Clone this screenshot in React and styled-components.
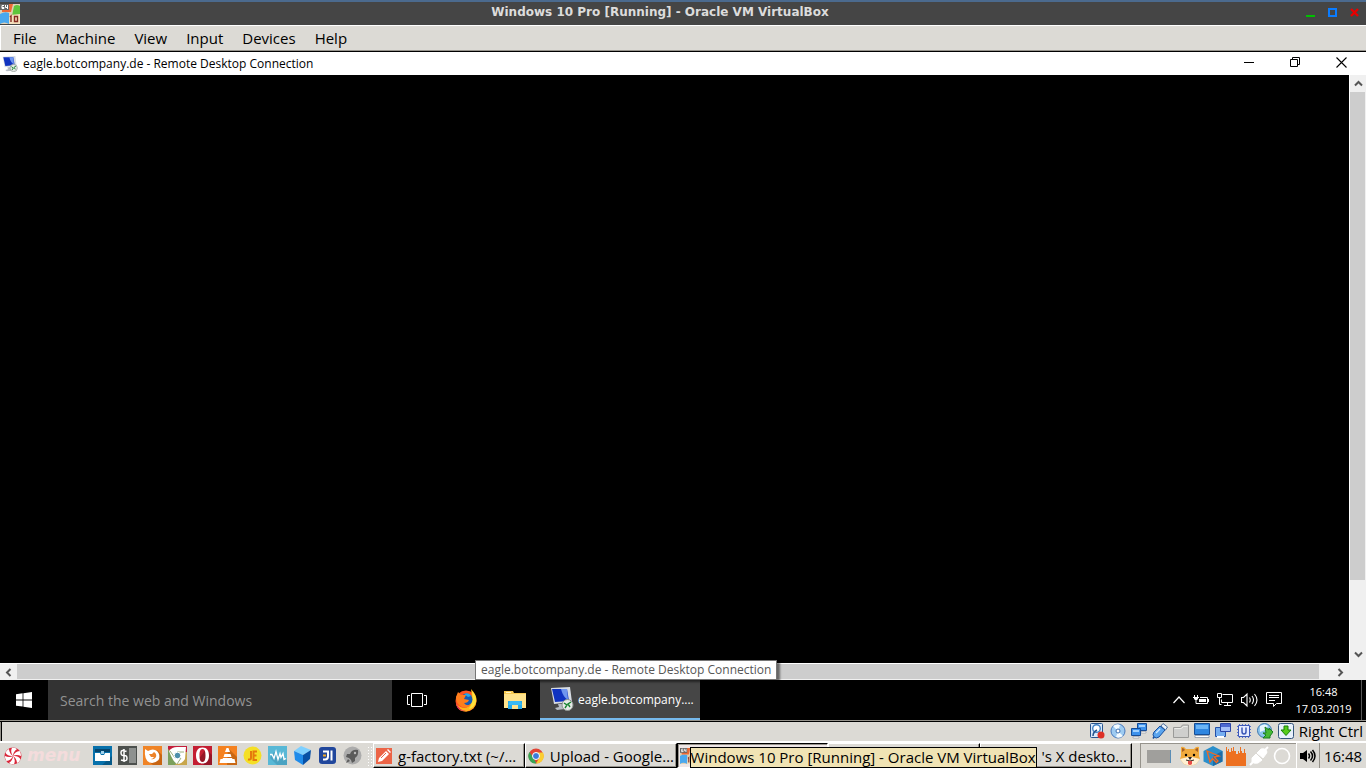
import React from 'react';
import styled, { createGlobalStyle } from 'styled-components';

const App = () => {
  return (
    <Screen>
      <GlobalStyle />
      <HostTitleBar>
        <VmIcon size={20} />
        <HostTitle>Windows 10 Pro [Running] - Oracle VM VirtualBox</HostTitle>
        <HostButtons>
          <HostButton aria-label="Minimize">
            <Svg $w={9} $h={9} viewBox="0 0 9 9"><path d="M0 7h9v2H0z" fill="#00c000" /></Svg>
          </HostButton>
          <HostButton aria-label="Maximize">
            <Svg $w={9} $h={9} viewBox="0 0 9 9"><path d="M1 1h7v7H1z" fill="none" stroke="#0a7cff" strokeWidth="2" /></Svg>
          </HostButton>
          <HostButton aria-label="Close">
            <Svg $w={9} $h={9} viewBox="0 0 9 9"><path d="M1 1l7 7M8 1L1 8" stroke="#e80000" strokeWidth="2.4" /></Svg>
          </HostButton>
        </HostButtons>
      </HostTitleBar>

      <MenuBar>
        {menus.map((name) => (
          <MenuButton key={name}>{name}</MenuButton>
        ))}
      </MenuBar>

      <GuestTitleBar>
        <RemoteIcon size={16} />
        <GuestTitle>eagle.botcompany.de - Remote Desktop Connection</GuestTitle>
        <GuestButton aria-label="Minimize">
          <Svg $w={11} $h={11} viewBox="0 0 11 11"><path d="M0 5.5h10" stroke="#000" /></Svg>
        </GuestButton>
        <GuestButton aria-label="Restore">
          <Svg $w={11} $h={11} viewBox="0 0 11 11"><path d="M.5 2.5h7v7h-7zM2.5 2.5v-2h7v7h-2" fill="none" stroke="#000" /></Svg>
        </GuestButton>
        <GuestButton aria-label="Close">
          <Svg $w={11} $h={11} viewBox="0 0 11 11"><path d="M.5.5l10 10M10.5.5l-10 10" stroke="#000" strokeWidth="1.1" /></Svg>
        </GuestButton>
      </GuestTitleBar>

      <Viewport>
        <RemoteScreen />
        <ScrollBar $vertical>
          <ScrollButton aria-label="Scroll up"><Chevron turn={0} /></ScrollButton>
          <Track $vertical><Thumb $vertical /></Track>
          <ScrollButton aria-label="Scroll down"><Chevron turn={180} /></ScrollButton>
        </ScrollBar>
        <ScrollBar>
          <ScrollButton aria-label="Scroll left"><Chevron turn={270} /></ScrollButton>
          <Track><Thumb /></Track>
          <ScrollButton aria-label="Scroll right"><Chevron turn={90} /></ScrollButton>
        </ScrollBar>
        <Corner />
      </Viewport>

      <WinTaskbar>
        <StartButton aria-label="Start">
          <Svg $w={16} $h={16} viewBox="0 0 16 16">
            <path d="M0 2.2L6.6 1.3V7.5H0zM7.4 1.2L16 0v7.5H7.4zM0 8.4h6.6v6.2L0 13.7zM7.4 8.4H16V16l-8.6-1.3z" fill="#fff" />
          </Svg>
        </StartButton>
        <SearchBox type="text" aria-label="Search" placeholder="Search the web and Windows" />
        <WinButton aria-label="Task View">
          <Svg $w={20} $h={14} viewBox="0 0 20 14">
            <path d="M4.5.5h11v13h-11zM3 2.5H.5v9H3M17 2.5h2.5v9H17" fill="none" stroke="#fff" />
          </Svg>
        </WinButton>
        <WinButton aria-label="Firefox"><FirefoxIcon /></WinButton>
        <WinButton aria-label="File Explorer"><FolderIcon /></WinButton>
        <WinTask>
          <RemoteIcon size={24} />
          <span>eagle.botcompany....</span>
          <WinTooltip role="tooltip">eagle.botcompany.de - Remote Desktop Connection</WinTooltip>
        </WinTask>
        <WinTray>
          <Svg $w={12} $h={16} viewBox="0 0 12 16"><path d="M.5 11L6 5l5.5 6" fill="none" stroke="#fff" strokeWidth="1.2" /></Svg>
          <Svg $w={16} $h={16} viewBox="0 0 16 16">
            <path d="M1.500 3v2M4.500 3v2M0 5.500h6M1 6.500h4M1.500 7.500h3M3 8v3.500h2M7 5.500h7.500v6H4.500" fill="none" stroke="#fff" />
            <path d="M6 7h7v3H6zM15 7h1v3h-1z" fill="#fff" />
          </Svg>
          <Svg $w={16} $h={16} viewBox="0 0 16 16">
            <path d="M5.500 2.500h10v8h-11v-3M10.500 10.500v3M7 13.500h7M.5 1.500h4v4h-4zM2.500 5.500v7h2" fill="none" stroke="#fff" />
          </Svg>
          <Svg $w={17} $h={16} viewBox="0 0 17 16">
            <path d="M.5 5.500h2l3.500-3.500v12l-3.500-3.500h-2zM8.500 5.500q1.500 2.500 0 5M11 4q3 4 0 8M13.500 2q5 6 0 12" fill="none" stroke="#fff" strokeWidth="1.100" />
          </Svg>
          <Svg $w={16} $h={16} viewBox="0 0 16 16">
            <path d="M.5.500h15v11H10.500l-3 3v-3h-7zM3 3.500h10M3 5.500h10M3 8.500h6" fill="none" stroke="#fff" />
          </Svg>
          <WinClock>
            <span>16:48</span>
            <span>17.03.2019</span>
          </WinClock>
        </WinTray>
      </WinTaskbar>

      <StatusBar>
        <DiskIcon />
        <DiscIcon />
        <NetworkIcon />
        <UsbIcon />
        <Svg $w={16} $h={16} viewBox="0 0 16 16">
          <path d="M.5 14.500v-10h7l2-2.500h6v12.500z" fill="#cfcfcd" stroke="#9a9a98" />
          <path d="M1.500 5.500h7l2-2h4" fill="none" stroke="#ecece9" />
        </Svg>
        <Svg $w={16} $h={16} viewBox="0 0 16 16">
          <path d="M.5.500h15v11H.5z" fill="#2f86e0" stroke="#174f98" />
          <path d="M2 2h12v4H2z" fill="#6bb4f5" />
          <path d="M1 12.500h14v2H1z" fill="#fff" stroke="#6b7b90" strokeWidth=".6" />
        </Svg>
        <Svg $w={16} $h={16} viewBox="0 0 16 16">
          <path d="M.5 4.500h10v9H.5z" fill="#76aef0" stroke="#2450a8" />
          <path d="M5.500.500h10v8h-10z" fill="#a5bff8" stroke="#2c46a8" />
          <path d="M6 1h9v3H6z" fill="#4d68d0" />
          <path d="M2 13h7v2H2z" fill="#fff" />
        </Svg>
        <Svg $w={16} $h={16} viewBox="0 0 16 16">
          <path d="M1 3.500h14M1 6.500h14M1 9.500h14M1 12.500h14M3.500 1v14M6.500 1v14M9.500 1v14M12.500 1v14" stroke="#5870c8" />
          <path d="M2.500 2.500h11v11h-11z" fill="#e7ecff" stroke="#3c58b8" />
          <path d="M6 4.500v4q0 2.500 2 2.500t2-2.500v-4" fill="none" stroke="#3c58b8" strokeWidth="1.500" />
        </Svg>
        <Svg $w={16} $h={16} viewBox="0 0 16 16">
          <circle cx="7.500" cy="7.500" r="7" fill="#8ec6ee" stroke="#3b76ad" />
          <path d="M3 3q5-3 8 0l-3 4-5 2z" fill="#e8f6ff" />
          <path d="M8 4l4 3V5l4 4-3 4v2H6l3-3-3-2h3z" fill="#48ba35" stroke="#187d20" />
        </Svg>
        <Svg $w={16} $h={16} viewBox="0 0 16 16">
          <rect x=".5" y=".5" width="15" height="15" rx="2" fill="#e7f0fb" stroke="#35557e" />
          <path d="M6 3h4v4h3l-5 5.500L3 7h3z" fill="#55cb19" stroke="#168007" />
        </Svg>
        <HostKey>Right Ctrl</HostKey>
      </StatusBar>

      <Panel>
        <MenuLauncher>
          <PeppermintIcon />
          <span>menu</span>
        </MenuLauncher>
        <Launchers>
          {launchers.map(({ name, art }) => (
            <IconButton key={name} aria-label={name}>
              <Svg $w={19} $h={19} viewBox="0 0 19 19">{art}</Svg>
            </IconButton>
          ))}
        </Launchers>
        <Grip />
        <TaskList>
          <Task>
            <Svg $w={16} $h={16} viewBox="0 0 16 16">
              <path d="M0 0h16v16H0z" fill="#ec6446" />
              <path d="M2 14l1-4 7-7 3 3-7 7zM11 2l1-1 3 3-1 1z" fill="#fff" />
              <path d="M5 10l5-5" stroke="#ec6446" />
            </Svg>
            <TaskLabel>g-factory.txt (~/…</TaskLabel>
          </Task>
          <Task>
            <ChromeIcon />
            <TaskLabel>Upload - Google…</TaskLabel>
          </Task>
          <Task $active>
            <VmIcon size={16} />
            <PanelTooltip role="tooltip">Windows 10 Pro [Running] - Oracle VM VirtualBox</PanelTooltip>
          </Task>
          <Task aria-label="Window" />
          <Task $alignEnd>
            <TaskLabel>'s X deskto…</TaskLabel>
          </Task>
        </TaskList>
        <Tray>
          <Pager />
          <ShibaIcon />
          <Svg $w={20} $h={20} viewBox="0 0 20 20">
            <path d="M10 0l9.500 5v10.500L10 20 .5 15.500V5z" fill="#2c8fcb" />
            <path d="M10 10l9.500-5v10.500L10 20z" fill="#1d6da6" />
            <path d="M4 5l12 5-5 1 4 4-1.500 1.500-4-4L7 16z" fill="none" stroke="#f26a21" strokeWidth="1.300" />
          </Svg>
          <Svg $w={20} $h={20} viewBox="0 0 20 20">
            <path d="M0 20V1h1v4h1V3h1v3h2V2h1v3h1V1h1v4h2v3h2V5h1v2h1V1h1v4h1v2h2V3h1v4h1v13z" fill="#ed7020" />
          </Svg>
          <Svg $w={20} $h={20} viewBox="0 0 20 20">
            <path d="M1 19l4-4M15 5l4-4" stroke="#fff" strokeWidth="2" />
            <path d="M3 12l4-4 6 6-4 3q-4 1-6-1zM8 7l4-4q3-1 5 1t0 4l-3 4z" fill="#fff" stroke="#fff" />
          </Svg>
          <Svg $w={20} $h={20} viewBox="0 0 20 20"><circle cx="10" cy="10" r="7.500" fill="none" stroke="#fff" strokeWidth="1.600" /></Svg>
        </Tray>
        <SoundButton aria-label="Volume">
          <Svg $w={16} $h={16} viewBox="0 0 16 16">
            <path d="M0 5h3l4-3v12l-4-3H0z" />
            <path d="M8.500 5.500q2 2.500 0 5M10.500 3.500q4 4.500 0 9M12.500 2q5 6 0 12" fill="none" stroke="#000" strokeWidth="1.500" />
          </Svg>
        </SoundButton>
        <PanelClock>16:48</PanelClock>
      </Panel>
    </Screen>
  );
};

const menus = ['File', 'Machine', 'View', 'Input', 'Devices', 'Help'];

const launchers = [
  {
    name: 'Files',
    art: <>
      <path d="M0 0h19v19H0z" fill="#0871ab" />
      <path d="M9 19l10-9v9z" fill="#075987" />
      <path d="M2 3h15v3H2z" fill="#06466e" />
      <path d="M2 7h5l1 2h3l1-2h5v8H2z" fill="#fff" />
      <path d="M8 5h3v3H8z" fill="#9ed0ea" />
    </>,
  },
  {
    name: 'Terminal',
    art: <>
      <path d="M0 0h19v19H0z" fill="#4c504d" />
      <path d="M11 2h7v15h-7z" fill="#8e918f" />
      <path d="M8.500 5.500Q3 3 3 6.500T6 9.500t3 3-6 1.500M6 3v13" fill="none" stroke="#fff" strokeWidth="1.500" />
    </>,
  },
  {
    name: 'Firefox',
    art: <>
      <path d="M0 0h19v19H0z" fill="#f08426" />
      <path d="M14 4l5 5v10h-9l-6-5z" fill="#c86512" />
      <path d="M2 3l3 2q5-3 9 0 4 4 1.500 9-4 4-9 2.500Q1 14 2 3z" fill="#fff" />
      <path d="M6 8l3 0 2-2q3 2 2 5-2 3-5 2 2 0 3-2H8z" fill="#ed8228" />
    </>,
  },
  {
    name: 'Chrome',
    art: <>
      <path d="M0 0h19v19H0z" fill="#c8a64b" />
      <path d="M0 0h19v6H9L4 9 0 3z" fill="#c41e3a" />
      <path d="M0 3l5 8 5 3-3 5H0z" fill="#7ba05b" />
      <path d="M1 5q3-4 8-4h9l-1 12q-3 5-8 5-4-2-8-13z" fill="#fff" />
      <path d="M2 5l5 7M16 6H9M9 18l4-6" stroke="#9aae7c" />
      <circle cx="9.500" cy="9.500" r="3.300" fill="#4d8fab" stroke="#fff" />
    </>,
  },
  {
    name: 'Opera',
    art: <>
      <path d="M0 0h19v19H0z" fill="#c41e32" />
      <path d="M13 3l6 6v10h-8l-6-5z" fill="#961526" />
      <path fillRule="evenodd" d="M9.500 1.500C5 1.500 3 5 3 9.500S5 17.500 9.500 17.500 16 14 16 9.500 14 1.500 9.500 1.500zm0 1.500C12 3 12.500 6 12.500 9.500S12 16 9.500 16 6.500 13 6.500 9.500 7 3 9.500 3z" fill="#fff" />
    </>,
  },
  {
    name: 'VLC',
    art: <>
      <path d="M0 0h19v19H0z" fill="#f58220" />
      <path d="M10 2l9 9v8H9z" fill="#c96813" />
      <path d="M8.500 2h2L12 6H7zM6.500 8h6l1 3h-8zM2.500 13h14l1 4h-16z" fill="#fff" />
      <path d="M5 12h9l1 2H4z" fill="#fff" />
    </>,
  },
  {
    name: 'JE',
    art: <>
      <circle cx="9.500" cy="9.500" r="9" fill="#f5df25" />
      <path d="M8 5v7q0 2-3 1.500M14 5.500h-3.500V14H14M10.500 9.500h3" fill="none" stroke="#e5790b" strokeWidth="2" />
    </>,
  },
  {
    name: 'Monitor',
    art: <>
      <path d="M0 0h19v19H0z" fill="#58b8d6" />
      <path d="M6 6l13 8v5H9L2 12z" fill="#4aa3c2" />
      <path d="M2 8.500h2l2 4 2-7 2 8 2-6 1 4 2-4 1 6 2-1" fill="none" stroke="#fff" strokeWidth="1.300" />
    </>,
  },
  {
    name: 'VirtualBox',
    art: <>
      <path d="M8 0l10 4-8 5L1 5z" fill="#7fd0ff" />
      <path d="M1 5l9 4v10l-8-5z" fill="#1f8bea" />
      <path d="M18 4l-8 5v10l7-6z" fill="#0750a6" />
    </>,
  },
  {
    name: 'JI',
    art: <>
      <rect x="1" y="1" width="17" height="17" rx="3" fill="#21479c" />
      <path d="M5 5.500h5v5q0 3-3 3H5M13.500 4.500v10" fill="none" stroke="#fff" strokeWidth="2" />
      <path d="M5 9.500h3" stroke="#f0ad28" strokeWidth="2" />
    </>,
  },
  {
    name: 'Rocket',
    art: <>
      <circle cx="9.500" cy="9.500" r="9" fill="#acacac" />
      <path d="M15 4q-6-1-8 4H4l-1 3 3 1 2 2 1 3 3-2v-3q4-3 3-8zM5 13l-2 4 4-2z" fill="#5b5b5b" />
      <circle cx="12" cy="7" r="1.200" fill="#bbb" />
    </>,
  },
];

const VmIcon = ({ size }) => (
  <Svg $w={size} $h={size} viewBox="0 0 20 20">
    <path d="M0 0h20v20H0z" fill="#dfd0b5" />
    <path d="M0 10q5-3 9-1v11q-5-3-9 0z" fill="#4aa8ee" />
    <path d="M9 0h4l-2 8H2V6z" fill="#ed6a35" />
    <path d="M14 2q3-2 6 0v10h-8z" fill="#5dc63c" />
    <path d="M10 11l10-1v10H9z" fill="#f4e0bd" />
    <path d="M0 0h9v6H0z" fill="#666" />
    <path d="M4 1.500H2v3h2v-1H2M5.500 1v2.500h2M7.500 1v4" fill="none" stroke="#fff" />
    <path d="M10 13l1-1v6M14.500 12.500h3v5h-3z" fill="none" stroke="#852a22" strokeWidth="1.400" />
  </Svg>
);

const RemoteIcon = ({ size }) => (
  <Svg $w={size} $h={size} viewBox="0 0 24 24">
    <path d="M1 1l19-1 2 15-18 2z" fill="#d7dce3" />
    <path d="M2 2h15l2 12-14 1z" fill="#1033c0" />
    <path d="M11 2h6l1 11q-5-3-7-11z" fill="#6f96ef" />
    <path d="M8 17h6l1 5-8 1-2-2 4-1z" fill="#b7bdc4" />
    <circle cx="17.500" cy="18" r="5.500" fill="#e6e9e7" stroke="#8d9591" />
    <path d="M14 16l3 2-2 3M21 15l-3 2 2 3" fill="none" stroke="#16842f" strokeWidth="1.400" />
  </Svg>
);

const FirefoxIcon = () => (
  <Svg $w={24} $h={24} viewBox="0 0 24 24">
    <circle cx="12" cy="13" r="10.500" fill="#ff5420" />
    <path d="M17 1q6 6 5.500 12-1 9-10 10.500Q4 24 2 16q8 7 13 2 4-7 2-17z" fill="#ffb51b" />
    <path d="M18 3q5 5 4 11-2 6-7 7 5-8 3-18z" fill="#ffe13c" />
    <circle cx="12.500" cy="11.500" r="6" fill="#155bb5" />
    <path d="M10 6q5-2 7 2l-3 1z" fill="#25a8e8" />
    <path d="M2 9l2-5 3 3 5 0-2 4 5 1q-1 3-5 3 3 4 7 1-3 5-9 3-6-3-6-10z" fill="#ff7e1c" />
    <path d="M2 15q3 7 10 8-9 1-10-8z" fill="#e5255d" />
  </Svg>
);

const FolderIcon = () => (
  <Svg $w={22} $h={20} viewBox="0 0 22 20">
    <path d="M0 1h9l1 2h12v15H0z" fill="#f7ca52" />
    <path d="M0 4h22v14H0z" fill="#ffe38c" />
    <path d="M2 2h5v1H2z" fill="#fff3c5" />
    <path d="M4 11h14v8h-4v-4H8v4H4z" fill="#27a9e8" />
    <path d="M6 11h10l2 4H4z" fill="#39baf4" />
    <path d="M8 15h6v4H8z" fill="#ffe38c" />
  </Svg>
);

const ChromeIcon = () => (
  <Svg $w={16} $h={16} viewBox="0 0 16 16">
    <circle cx="8" cy="8" r="7.500" fill="#e24435" />
    <path d="M1.500 4l4 6 3 5.500A7.500 7.500 0 011.500 4z" fill="#37a554" />
    <path d="M8 4.500h7a7.500 7.500 0 01-7 11l3.500-6z" fill="#fbce32" />
    <circle cx="8" cy="8" r="3.500" fill="#3b7cda" stroke="#fff" />
  </Svg>
);

const DiskIcon = () => (
  <Svg $w={16} $h={16} viewBox="0 0 16 16">
    <rect x="1.500" y=".5" width="12" height="14" rx="1" fill="#dceafa" stroke="#28568f" />
    <circle cx="7.500" cy="5.500" r="3.800" fill="#fff" stroke="#4383c5" strokeWidth="1.400" />
    <path d="M4 13q0-4 4-6" fill="none" stroke="#27568c" strokeWidth="1.500" />
    <circle cx="12" cy="12" r="3.500" fill="#de3026" />
  </Svg>
);

const DiscIcon = () => (
  <Svg $w={16} $h={16} viewBox="0 0 16 16">
    <circle cx="8" cy="8" r="7" fill="#9ecbf1" stroke="#4778bc" />
    <path d="M8 8L3 3q4-3 7-1zM8 8l5 5q-4 3-7 1z" fill="#f4fbff" />
    <circle cx="8" cy="8" r="2" fill="#fff" stroke="#3d70b1" />
  </Svg>
);

const NetworkIcon = () => (
  <Svg $w={16} $h={16} viewBox="0 0 16 16">
    <path d="M6.500.500h9v7h-9z" fill="#3c91ec" stroke="#174c96" />
    <path d="M10 8.500h5v1.500h-5z" fill="#fff" stroke="#7b8290" strokeWidth=".5" />
    <path d="M.5 5.500h9v7h-9z" fill="#3c91ec" stroke="#174c96" />
    <path d="M8 2h6v2H8zM2 7h6v2H2z" fill="#9fd0ff" />
    <path d="M2 13.500h6V15H2z" fill="#fff" stroke="#7b8290" strokeWidth=".5" />
  </Svg>
);

const UsbIcon = () => (
  <Svg $w={16} $h={16} viewBox="0 0 16 16">
    <path d="M11 .5l4.500 3.500-2 3L9 3z" fill="#e8f1fb" stroke="#4e6f9d" />
    <path d="M8 3l5 4-6 7q-3 2-5 0t0-5z" fill="#5ba5ee" stroke="#174f9f" />
    <path d="M4 10l4-4" stroke="#d2eaff" strokeWidth="1.500" />
    <path d="M2 14l-1 1.500" stroke="#174f9f" strokeWidth="1.500" />
  </Svg>
);

const PeppermintIcon = () => (
  <Svg $w={18} $h={18} viewBox="0 0 18 18">
    <circle cx="9" cy="9" r="8.500" fill="#d9273a" />
    {[0, 60, 120, 180, 240, 300].map((angle) => (
      <path key={angle} d="M9 9Q6 5 8 .8q3-.3 5 1.200Q9 5 9 9z" fill="#fff" transform={`rotate(${angle} 9 9)`} />
    ))}
  </Svg>
);

const ShibaIcon = () => (
  <Svg $w={20} $h={20} viewBox="0 0 20 20">
    <path d="M1 1q3-1 5 2h8q2-3 5-2v9l1 3-4 5-6 2-6-2-4-5 1-3z" fill="#f0aa3c" />
    <path d="M2 2q2 0 3 2L2 6zM18 2q-2 0-3 2l3 2z" fill="#a75f27" />
    <path d="M0 13l4-1 4-1h4l4 1 4 1-4 5-6 2-6-2z" fill="#fff0d2" />
    <path d="M8 11h4l-2 3z" fill="#26201d" />
    <circle cx="6" cy="9" r="1.200" />
    <circle cx="14" cy="9" r="1.200" />
    <path d="M6 14q4 2 8 0" fill="none" stroke="#3a2a20" />
    <path d="M8 15h4v3q-2 2-4 0z" fill="#e84d48" />
  </Svg>
);

const Chevron = ({ turn }) => (
  <Svg $w={9} $h={9} viewBox="0 0 9 9">
    <path d="M1 6.500l3.500-3.500L8 6.500" fill="none" stroke="#555" strokeWidth="2" transform={`rotate(${turn} 4.500 4.500)`} />
  </Svg>
);

const GlobalStyle = createGlobalStyle`
  * {
    box-sizing: border-box;
  }

  body {
    margin: 0;
    background-color: #000000;
  }

  button, input {
    margin: 0;
    padding: 0;
    border: 0;
    border-radius: 0;
    background: none;
    color: inherit;
    font: inherit;
  }
`;

const Svg = styled.svg`
  display: block;
  flex: none;
  width: ${props => props.$w}px;
  height: ${props => props.$h}px;
`;

const Screen = styled.div`
  display: flex;
  flex-direction: column;
  height: 100vh;
  overflow: hidden;
  font-family: 'Open Sans', 'Noto Sans', sans-serif;
  font-size: 15px;
  color: #000000;
`;

const HostTitleBar = styled.header`
  display: grid;
  grid-template-columns: 60px 1fr 106px;
  align-items: center;
  height: 25px;
  border-top: 2px solid #4b6a8e;
  background-color: #454545;
`;

const HostTitle = styled.h1`
  margin: 0;
  padding-bottom: 4px;
  text-align: center;
  font-family: 'DejaVu Sans', sans-serif;
  font-size: 12px;
  line-height: 18px;
  font-weight: bold;
  color: #dcdcdc;
`;

const HostButtons = styled.div`
  display: flex;
  gap: 13px;
  justify-content: flex-end;
  padding: 0 7px 2px 0;
`;

const HostButton = styled.button`
  display: flex;
`;

const MenuBar = styled.nav`
  display: flex;
  align-items: flex-start;
  height: 27px;
  padding: 0 3px;
  border-top: 1px solid #ffffff;
  border-bottom: 1px solid #000000;
  box-shadow: inset 0 -1px #96938c, inset 1px 0 #ffffff;
  background-color: #dcdad5;
`;

const MenuButton = styled.button`
  padding: 0 9px 0 10px;
  line-height: 24px;
`;

const GuestTitleBar = styled.header`
  display: flex;
  align-items: center;
  height: 23px;
  padding-left: 2px;
  background-color: #ffffff;
`;

const GuestTitle = styled.h2`
  flex: 1;
  margin: 0 0 0 5px;
  font-size: 12px;
  font-weight: normal;
  line-height: 20px;
`;

const GuestButton = styled.button`
  display: flex;
  justify-content: center;
  width: 46px;
  padding-bottom: 2px;

  &:last-child {
    margin-right: 2px;
  }
`;

const Viewport = styled.main`
  display: grid;
  flex: 1;
  grid-template-columns: 1fr 17px;
  grid-template-rows: 1fr 17px;
  min-height: 0;
`;

const RemoteScreen = styled.div`
  background-color: #000000;
`;

const ScrollBar = styled.div`
  display: flex;
  flex-direction: ${props => props.$vertical ? 'column' : 'row'};
  border-left: ${props => props.$vertical ? '1px solid #ffffff' : '0'};
  border-top: ${props => props.$vertical ? '0' : '1px solid #ffffff'};
  background-color: #f0f0f0;
`;

const ScrollButton = styled.button`
  display: flex;
  flex: 0 0 17px;
  align-items: center;
  justify-content: center;
`;

const Track = styled.div`
  display: flex;
  flex: 1;
  flex-direction: ${props => props.$vertical ? 'column' : 'row'};
`;

const Thumb = styled.div`
  flex: 0 0 ${props => props.$vertical ? '88%' : '99%'};
  margin: ${props => props.$vertical ? '0 1px 0 0' : '0 0 1px'};
  background-color: #cdcdcd;
`;

const Corner = styled.div`
  background-color: #f0f0f0;
`;

const WinTaskbar = styled.div`
  display: flex;
  height: 40px;
  background-color: #000000;
  color: #ffffff;
  font-size: 12px;
`;

const StartButton = styled.button`
  display: flex;
  align-items: center;
  justify-content: center;
  width: 48px;
`;

const SearchBox = styled.input`
  width: 344px;
  padding: 0 12px;
  background-color: #333333;
  font-size: 14px;

  &::placeholder {
    color: #929292;
    opacity: 1;
  }
`;

const WinButton = styled.button`
  display: flex;
  align-items: center;
  justify-content: center;
  width: 49px;
`;

const WinTask = styled.button`
  position: relative;
  display: flex;
  align-items: center;
  gap: 4px;
  width: 160px;
  margin-left: 1px;
  padding-left: 10px;
  border-bottom: 2px solid #76b9ed;
  background-color: #464646;
  white-space: nowrap;
`;

const WinTooltip = styled.span`
  position: absolute;
  bottom: 100%;
  left: -65px;
  padding: 0 5px;
  border: 1px solid #767676;
  background-color: #ffffff;
  box-shadow: 3px 2px 2px rgba(0, 0, 0, 0.5);
  color: #575757;
  line-height: 18px;
`;

const WinTray = styled.div`
  display: flex;
  align-items: center;
  gap: 8px;
  margin-left: auto;
  padding-right: 4px;
`;

const WinClock = styled.div`
  display: flex;
  flex-direction: column;
  align-items: center;
  justify-content: center;
  width: 72px;
  height: 40px;
  padding-right: 4px;
  border-right: 1px solid #555555;
  font-size: 11px;
  line-height: 17px;
`;

const StatusBar = styled.div`
  display: flex;
  align-items: center;
  justify-content: flex-end;
  gap: 5px;
  height: 21px;
  padding-right: 3px;
  border-top: 1px solid #96938c;
  box-shadow: inset 0 1px #000000, inset 1px 0 #96938c, inset 2px 0 #000000;
  background-color: #dcdad5;
`;

const HostKey = styled.span`
  line-height: 20px;
`;

const Panel = styled.footer`
  display: flex;
  align-items: center;
  height: 27px;
  padding-left: 4px;
  border-top: 2px solid #ffffff;
  background-color: #dcdad5;
`;

const MenuLauncher = styled.button`
  display: flex;
  align-items: center;
  gap: 5px;
  width: 89px;
  font-family: 'DejaVu Sans', sans-serif;
  font-size: 17px;
  font-style: italic;
  font-weight: bold;
  line-height: 20px;
  color: #f4dcdc;

  span {
    padding-bottom: 2px;
  }
`;

const Launchers = styled.div`
  display: flex;
  gap: 6px;
`;

const IconButton = styled.button`
  display: flex;
`;

const Grip = styled.div`
  width: 5px;
  height: 20px;
  margin: 0 1px 0 5px;
  background-image: radial-gradient(#ffffff 1px, transparent 1px);
  background-size: 3px 3px;
`;

const TaskList = styled.div`
  display: grid;
  flex: 1;
  grid-template-columns: repeat(5, 1fr);
  align-self: stretch;
  min-width: 0;
`;

const Task = styled.button`
  position: relative;
  display: flex;
  align-items: center;
  justify-content: ${props => props.$alignEnd ? 'flex-end' : 'flex-start'};
  gap: 6px;
  min-width: 0;
  padding: 0 4px 0 2px;
  border: 1px solid;
  border-color: ${props => props.$active ? '#000000 #ffffff #ffffff #000000' : '#ffffff #000000 #000000 #ffffff'};
  box-shadow: ${props => props.$active ? 'inset 1px 1px #96938c' : 'inset -1px -1px #96938c'};
  background-color: ${props => props.$active ? '#eee6e6' : '#dcdad5'};
  z-index: ${props => props.$active ? 1 : 0};
  white-space: nowrap;
`;

const TaskLabel = styled.span`
  line-height: 20px;
`;

const PanelTooltip = styled.span`
  position: absolute;
  top: 3px;
  left: 12px;
  border: 1px solid #000000;
  background-color: #f0e3b4;
  line-height: 19px;
`;

const Tray = styled.div`
  display: flex;
  align-items: center;
  align-self: stretch;
  gap: 3px;
  margin-left: 8px;
  padding: 0 4px 0 6px;
  border-top: 1px solid #96938c;
  border-left: 1px solid #96938c;
`;

const Pager = styled.div`
  width: 24px;
  height: 13px;
  margin-right: 6px;
  border-right: 1px solid #5b8db5;
  background-color: #a09f9c;
`;

const SoundButton = styled.button`
  display: flex;
  align-items: center;
  align-self: stretch;
  justify-content: center;
  width: 24px;
  border-right: 1px solid #96938c;
  border-left: 1px solid #ffffff;
`;

const PanelClock = styled.time`
  width: 46px;
  text-align: center;
  line-height: 20px;
`;

export default App;
